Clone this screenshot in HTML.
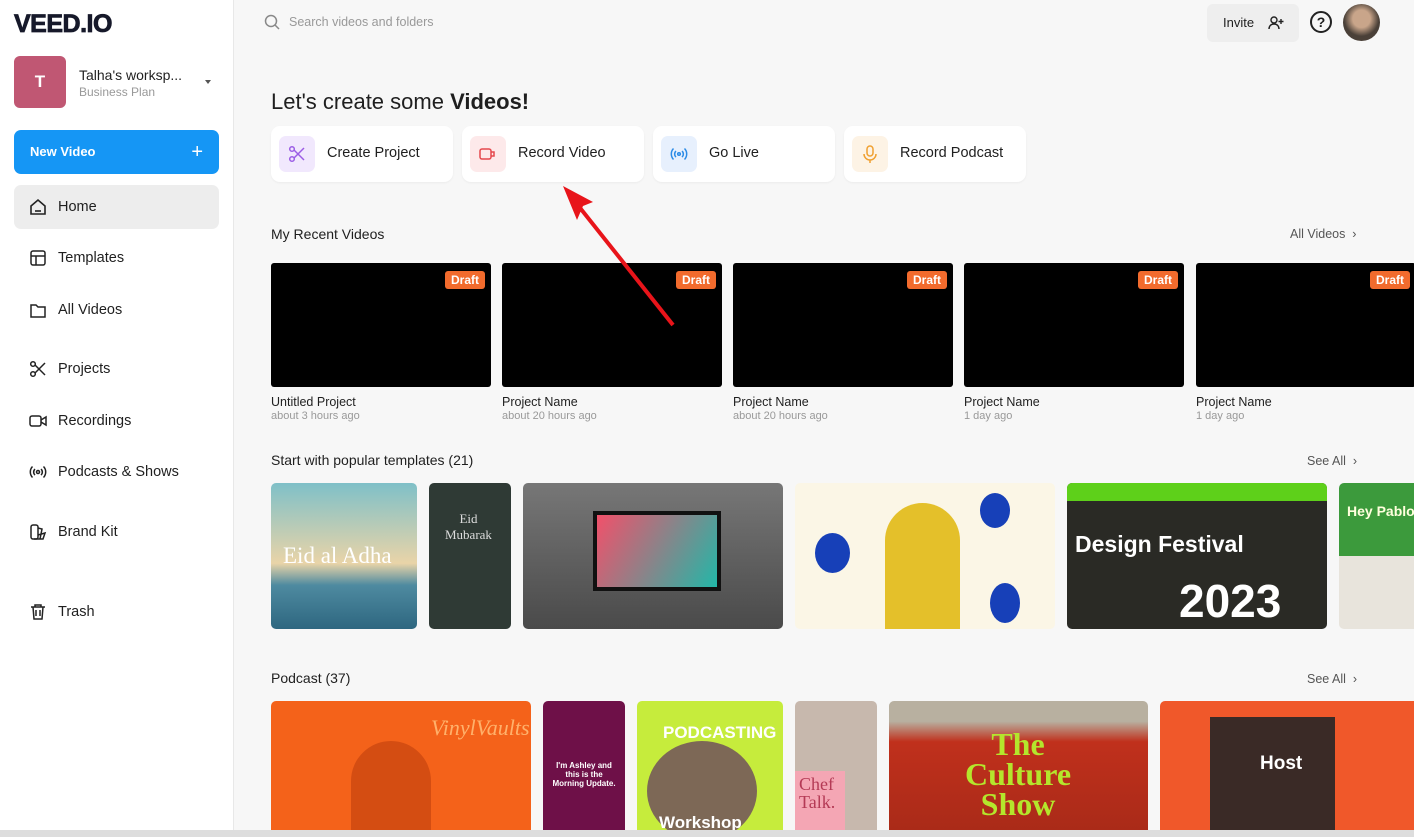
<!DOCTYPE html><html><head><style>
*{box-sizing:border-box;margin:0;padding:0}
body{width:1414px;height:837px;overflow:hidden;background:#f7f7f7;font-family:"Liberation Sans",sans-serif;color:#1f1f1f;position:relative}
.sb{position:absolute;left:0;top:0;width:234px;height:837px;background:#fff;border-right:1px solid #e8e8e8}
.logo{position:absolute;left:14px;top:10px;font-weight:900;font-size:25px;letter-spacing:-0.5px;color:#16192a;-webkit-text-stroke:0.8px #16192a}
.av{position:absolute;left:14px;top:56px;width:52px;height:52px;border-radius:6px;background:#c05773;color:#fff;font-weight:bold;font-size:17px;text-align:center;line-height:52px}
.ws{position:absolute;left:79px;top:67px;font-size:14px}
.ws small{display:block;color:#999;font-size:12px;margin-top:2px}
.nv{position:absolute;left:14px;top:130px;width:205px;height:44px;border-radius:7px;background:#1596f5;color:#fff;font-weight:bold;font-size:13px;line-height:44px;padding-left:16px}
.nv span{position:absolute;right:16px;font-size:20px;font-weight:normal}
.ni{position:absolute;left:14px;width:205px;height:44px;border-radius:7px;font-size:14.5px;line-height:44px;padding-left:44px}
.ni svg{position:absolute;left:15px;top:13px}
.main{position:absolute;left:235px;top:0;right:0;height:837px}
.t{position:absolute;font-size:14px}
.card{position:absolute;top:126px;width:182px;height:56px;background:#fff;border-radius:9px;box-shadow:0 1px 2px rgba(0,0,0,.05)}
.card i{position:absolute;left:8px;top:10px;width:36px;height:36px;border-radius:7px}
.card i svg{position:absolute;left:9px;top:9px}
.card b{position:absolute;left:56px;top:19px;font-weight:normal;font-size:14.5px}
.vid{position:absolute;top:263px;width:220px;height:124px;background:#000;border-radius:3px}
.vid span{position:absolute;right:6px;top:8px;background:#f26b2d;color:#fff;font-size:12px;font-weight:bold;padding:2px 6px;border-radius:3px}
.vn{position:absolute;top:395px;font-size:12.5px}
.vn small{display:block;color:#999;font-size:11px;margin-top:1px}
.th{position:absolute;border-radius:5px;overflow:hidden}
.sa{position:absolute;font-size:12.5px;color:#555}
</style></head><body>
<div class="sb">
<div class="logo">VEED.IO</div>
<div class="av">T</div>
<div class="ws">Talha's worksp...<small>Business Plan</small></div>
<div style="position:absolute;left:205px;top:80px;border:3px solid transparent;border-top:4px solid #555"></div>
<div class="nv">New Video<span>+</span></div>
<div class="ni" style="top:185px;background:#ededed"><svg width="18" height="18" viewBox="0 0 18 18" fill="none" stroke="#222" stroke-width="1.6"><path d="M2 8L9 2l7 6v8H2z"/><path d="M6 13h6"/></svg>Home</div>
<div class="ni" style="top:236px"><svg width="18" height="18" viewBox="0 0 18 18" fill="none" stroke="#222" stroke-width="1.5"><rect x="2" y="2" width="14" height="14" rx="2"/><path d="M2 7h14M7 7v9"/></svg>Templates</div>
<div class="ni" style="top:288px"><svg width="18" height="18" viewBox="0 0 18 18" fill="none" stroke="#222" stroke-width="1.5"><path d="M2 4h5l2 2h7v10H2z"/></svg>All Videos</div>
<div class="ni" style="top:347px"><svg width="18" height="18" viewBox="0 0 18 18" fill="none" stroke="#222" stroke-width="1.5"><circle cx="4" cy="4" r="2.3"/><circle cx="4" cy="14" r="2.3"/><path d="M6 5l10 10M6 13L16 3"/></svg>Projects</div>
<div class="ni" style="top:399px"><svg width="18" height="18" viewBox="0 0 18 18" fill="none" stroke="#222" stroke-width="1.5"><rect x="1" y="4" width="11" height="10" rx="2"/><path d="M12 8l5-3v8l-5-3"/></svg>Recordings</div>
<div class="ni" style="top:450px"><svg width="18" height="18" viewBox="0 0 18 18" fill="none" stroke="#222" stroke-width="1.5"><circle cx="9" cy="9" r="1.5"/><path d="M6 6a4 4 0 000 6M12 6a4 4 0 010 6M3.5 3.5a8 8 0 000 11M14.5 3.5a8 8 0 010 11"/></svg>Podcasts &amp; Shows</div>
<div class="ni" style="top:510px"><svg width="18" height="18" viewBox="0 0 18 18" fill="none" stroke="#222" stroke-width="1.5"><rect x="2" y="2" width="7" height="14" rx="2"/><path d="M9 5l4 1-2 10M9 12l7-2-2 6H5"/></svg>Brand Kit</div>
<div class="ni" style="top:590px"><svg width="18" height="18" viewBox="0 0 18 18" fill="none" stroke="#222" stroke-width="1.5"><path d="M2 4h14M6 4V2h6v2M4 4l1 12h8l1-12M7 7v6M11 7v6"/></svg>Trash</div>
</div>
<div class="main">
<svg style="position:absolute;left:29px;top:14px" width="16" height="16" fill="none" stroke="#888" stroke-width="1.5"><circle cx="7" cy="7" r="5.5"/><path d="M11 11l4 4"/></svg>
<div class="t" style="left:54px;top:15px;color:#999;font-size:12.5px">Search videos and folders</div>
<div style="position:absolute;left:972px;top:4px;width:92px;height:38px;background:#eee;border-radius:6px;font-size:13px;line-height:38px;padding-left:16px">Invite<svg style="position:absolute;left:61px;top:11px" width="16" height="16" fill="none" stroke="#222" stroke-width="1.4"><circle cx="6" cy="5" r="3"/><path d="M1 14c0-3 2-5 5-5s5 2 5 5M13 4v5M10.5 6.5h5"/></svg></div>
<div style="position:absolute;left:1075px;top:11px;width:22px;height:22px;border:2px solid #222;border-radius:50%;text-align:center;font-weight:bold;font-size:14px;line-height:18px">?</div>
<div style="position:absolute;left:1108px;top:4px;width:37px;height:37px;border-radius:50%;background:radial-gradient(circle at 50% 40%,#c9a58a 30%,#4a4038 60%)"></div>
<div class="t" style="left:36px;top:89px;font-size:22px">Let's create some <b>Videos!</b></div>
<div class="card" style="left:36px"><i style="background:#f1e8fd"><svg width="18" height="18" fill="none" stroke="#9b5de5" stroke-width="1.5"><circle cx="4" cy="4" r="2.3"/><circle cx="4" cy="14" r="2.3"/><path d="M6 5l10 10M6 13L16 3"/></svg></i><b>Create Project</b></div>
<div class="card" style="left:227px"><i style="background:#fde9ea"><svg width="18" height="18" fill="none" stroke="#e5484d" stroke-width="1.5"><rect x="1" y="4" width="11" height="10" rx="2"/><path d="M12 7h3v4h-3"/></svg></i><b>Record Video</b></div>
<div class="card" style="left:418px"><i style="background:#e7f0fd"><svg width="18" height="18" fill="none" stroke="#2d8ce6" stroke-width="1.5"><circle cx="9" cy="9" r="1.3"/><path d="M6 6a4 4 0 000 6M12 6a4 4 0 010 6M3.5 3.5a8 8 0 000 11M14.5 3.5a8 8 0 010 11"/></svg></i><b>Go Live</b></div>
<div class="card" style="left:609px"><i style="background:#fdf3e5"><svg width="18" height="18" fill="none" stroke="#f0a030" stroke-width="1.5"><rect x="6" y="1" width="6" height="10" rx="3"/><path d="M3 9a6 6 0 0012 0M9 15v3"/></svg></i><b>Record Podcast</b></div>
<div class="t" style="left:36px;top:226px">My Recent Videos</div>
<div class="sa" style="left:1055px;top:227px">All Videos &nbsp;›</div>
<div class="vid" style="left:36px"><span>Draft</span></div>
<div class="vid" style="left:267px"><span>Draft</span></div>
<div class="vid" style="left:498px"><span>Draft</span></div>
<div class="vid" style="left:729px"><span>Draft</span></div>
<div class="vid" style="left:961px"><span>Draft</span></div>
<div class="vn" style="left:36px">Untitled Project<small>about 3 hours ago</small></div>
<div class="vn" style="left:267px">Project Name<small>about 20 hours ago</small></div>
<div class="vn" style="left:498px">Project Name<small>about 20 hours ago</small></div>
<div class="vn" style="left:729px">Project Name<small>1 day ago</small></div>
<div class="vn" style="left:961px">Project Name<small>1 day ago</small></div>
<div class="t" style="left:36px;top:452px">Start with popular templates (21)</div>
<div class="sa" style="left:1072px;top:454px">See All &nbsp;›</div>
<div class="th" style="left:36px;top:483px;width:146px;height:146px;background:linear-gradient(#7fc0c8,#e9d4a8 55%,#4e8aa0 70%,#2e6780)"><div style="color:#fff;font-family:'Liberation Serif';font-size:23px;position:absolute;top:60px;left:12px">Eid al Adha</div></div>
<div class="th" style="left:194px;top:483px;width:82px;height:146px;background:#2f3a35"><div style="color:#ddd;font-family:'Liberation Serif';font-size:13px;position:absolute;top:28px;left:16px;text-align:center">Eid<br>Mubarak</div></div>
<div class="th" style="left:288px;top:483px;width:260px;height:146px;background:linear-gradient(#777,#4a4a4a)"><div style="position:absolute;left:70px;top:28px;width:128px;height:80px;background:linear-gradient(120deg,#f2506a,#22b7a8);border:4px solid #111"></div></div>
<div class="th" style="left:560px;top:483px;width:260px;height:146px;background:#fbf6e6"><div style="position:absolute;left:90px;top:20px;width:75px;height:126px;background:#e4c02a;border-radius:40px 40px 0 0"></div><div style="position:absolute;left:20px;top:50px;width:35px;height:40px;background:#1740b8;border-radius:50%"></div><div style="position:absolute;left:195px;top:100px;width:30px;height:40px;background:#1740b8;border-radius:50%"></div><div style="position:absolute;left:185px;top:10px;width:30px;height:35px;background:#1740b8;border-radius:50%"></div></div>
<div class="th" style="left:832px;top:483px;width:260px;height:146px;background:#2a2a25"><div style="position:absolute;left:0;top:0;width:260px;height:18px;background:#5ed01a"></div><div style="position:absolute;left:8px;top:48px;color:#fff;font-weight:bold;font-size:23px">Design Festival</div><div style="position:absolute;left:112px;top:95px;color:#fff;font-weight:bold;font-size:46px;line-height:46px">2023</div></div>
<div class="th" style="left:1104px;top:483px;width:80px;height:146px;background:linear-gradient(#3c9a3c 50%,#e8e4dc 50%)"><div style="position:absolute;left:8px;top:20px;font-weight:bold;font-size:14px;color:#ffd">Hey Pablo</div></div>
<div class="t" style="left:36px;top:670px">Podcast (37)</div>
<div class="sa" style="left:1072px;top:672px">See All &nbsp;›</div>
<div class="th" style="left:36px;top:701px;width:260px;height:136px;background:#f4621a"><div style="position:absolute;left:80px;top:40px;width:80px;height:100px;background:#d44d12;border-radius:40px 40px 0 0"></div><div style="position:absolute;left:160px;top:14px;color:#ffb16b;font-style:italic;font-size:22px;font-family:'Liberation Serif'">VinylVaults</div></div>
<div class="th" style="left:308px;top:701px;width:82px;height:136px;background:#6e1048"><div style="position:absolute;left:6px;top:60px;color:#fff;font-size:8px;font-weight:bold;text-align:center;width:70px">I'm Ashley and this is the Morning Update.</div></div>
<div class="th" style="left:402px;top:701px;width:146px;height:136px;background:#c6ec3c"><div style="position:absolute;left:10px;top:40px;width:110px;height:100px;background:#7d6856;border-radius:50%"></div><div style="position:absolute;left:26px;top:22px;color:#fff;font-weight:bold;font-size:17px">PODCASTING</div><div style="position:absolute;left:22px;top:112px;color:#fff;font-weight:bold;font-size:17px">Workshop</div></div>
<div class="th" style="left:560px;top:701px;width:82px;height:136px;background:#c7b8ad"><div style="position:absolute;left:0;top:70px;width:50px;height:60px;background:#f4a6b4"></div><div style="position:absolute;left:4px;top:74px;color:#b43a55;font-family:'Liberation Serif';font-size:18px;line-height:18px">Chef<br>Talk.</div></div>
<div class="th" style="left:654px;top:701px;width:259px;height:136px;background:linear-gradient(#b8b0a0 15%,#c0301c 30%,#a82a18)"><div style="position:absolute;left:44px;top:28px;color:#b4e62c;font-weight:bold;font-size:32px;text-align:center;width:170px;line-height:30px;font-family:'Liberation Serif'">The<br>Culture<br>Show</div></div>
<div class="th" style="left:925px;top:701px;width:260px;height:136px;background:#f0582a"><div style="position:absolute;left:50px;top:16px;width:125px;height:120px;background:#3a2a26"></div><div style="position:absolute;left:100px;top:52px;color:#fff;font-weight:bold;font-size:19px">Host</div></div>
<svg style="position:absolute;left:320px;top:180px" width="130" height="150"><path d="M118 145L14 14" stroke="#e8141a" stroke-width="4"/><path d="M8 6L38 22 L28 26 L22 40z" fill="#e8141a"/></svg>
</div>
<div style="position:absolute;left:0;top:830px;width:1414px;height:7px;background:#ddd"></div>
</body></html>
